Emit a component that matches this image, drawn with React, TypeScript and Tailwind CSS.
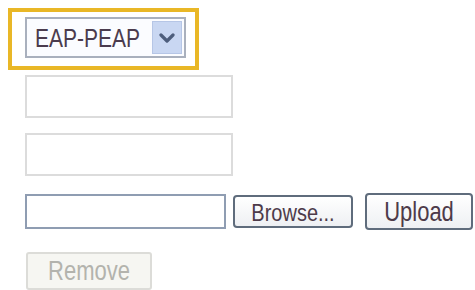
import React from 'react';

const font = { fontFamily: '"Liberation Sans", Arial, sans-serif' };

const Label: React.FC<{ children: React.ReactNode; className?: string }> = ({ children, className = '' }) => (
  <span className={`inline-block scale-y-[1.22] leading-none ${className}`}>{children}</span>
);

export default function App() {
  return (
    <div className="w-[475px] h-[290px] bg-white overflow-hidden" style={font}>
      <div className="flex flex-col pt-[8px]">
        {/* highlighted select */}
        <div className="ml-[8px] w-[191px] h-[62px] border-[4px] border-[#e9b726] pl-[13px] pt-[5px]">
          <div className="w-[161px] h-[41px] border-2 border-[#a9b0bd] bg-[#fbfcff] flex items-center justify-between pl-[8px] pr-[2px]">
            <Label className="text-[21px] text-[#4b3c4e]">EAP-PEAP</Label>
            <div className="w-[30px] h-[33px] bg-[#c9d7f2] border border-[#b6c6e6] flex items-center justify-center">
              <svg width="16" height="12" viewBox="0 0 16 12">
                <path d="M2 3 L8 9 L14 3" fill="none" stroke="#4d5d7c" strokeWidth="3.2" strokeLinecap="round" strokeLinejoin="round" />
              </svg>
            </div>
          </div>
        </div>

        <div className="pl-[25px] flex flex-col">
          <div className="mt-[5px] w-[208px] h-[43px] border-2 border-[#dcdcdc]" />
          <div className="mt-[15px] w-[208px] h-[43px] border-2 border-[#dcdcdc]" />

          <div className="mt-[17px] flex items-center">
            <div className="w-[201px] h-[35px] border-2 border-[#8f9db2] bg-white" />
            <button className="ml-[7px] w-[120px] h-[33px] rounded-[4px] border-2 border-[#5f6c7c] bg-gradient-to-b from-white to-[#eef0f3] flex items-center justify-center">
              <Label className="text-[20px] text-[#4d3b4a]">Browse...</Label>
            </button>
            <button className="ml-[12px] w-[108px] h-[37px] rounded-[4px] border-2 border-[#5f6c7c] bg-gradient-to-b from-white to-[#eef0f3] flex items-center justify-center">
              <Label className="text-[22px] text-[#4d3b4a]">Upload</Label>
            </button>
          </div>

          <button className="mt-[22px] ml-[1px] w-[126px] h-[38px] rounded-[3px] border-2 border-[#dcdcd8] bg-[#f6f6f2] flex items-center justify-center">
            <Label className="text-[22px] text-[#b3b3ad]">Remove</Label>
          </button>
        </div>
      </div>
    </div>
  );
}
